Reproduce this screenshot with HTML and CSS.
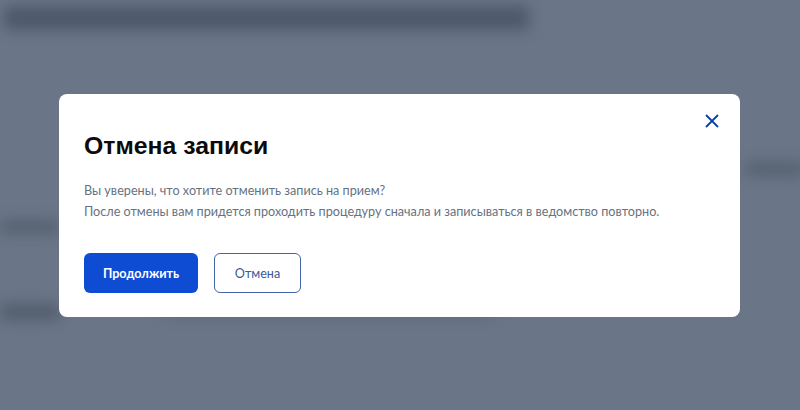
FILE: index.html
```html
<!DOCTYPE html>
<html lang="ru">
<head>
<meta charset="utf-8">
<link rel="stylesheet" href="styles.css">
</head>
<body>
<div class="page">
  <div class="page-title"></div>
  <div class="page-row r1"></div>
  <div class="page-row r2"></div>
  <div class="page-row r3"></div>
  <div class="page-row r4"></div>
  <div class="page-row r5"></div>
</div>
<div class="overlay">
  <div class="modal">
    <button class="close" aria-label="Закрыть">
      <svg width="14" height="14" viewBox="0 0 14 14"><path d="M1 1L13 13M13 1L1 13" stroke="#0b3ea8" stroke-width="1.8" fill="none"/></svg>
    </button>
    <h2 class="title">Отмена записи</h2>
    <p class="text">Вы уверены, что хотите отменить запись на прием?<br>После отмены вам придется проходить процедуру сначала и записываться в ведомство повторно.</p>
    <div class="actions">
      <button class="btn primary">Продолжить</button>
      <button class="btn secondary">Отмена</button>
    </div>
  </div>
</div>
</body>
</html>
```
FILE: styles.css
```css
html, body {
  margin: 0;
  padding: 0;
  width: 800px;
  height: 410px;
  overflow: hidden;
  background: #6a7587;
  font-family: Lato, "Noto Sans", sans-serif;
}
.page {
  display: flex;
  flex-direction: column;
  padding: 6px 0 0 0;
  filter: blur(7px);
}
.page-title {
  width: 525px;
  height: 24px;
  margin-left: 4px;
  background: #4d596b;
  border-radius: 4px;
}
.page-row {
  border-radius: 4px;
}
.r1 { width: 60px; height: 14px; margin: 132px 0 0 745px; background: #56616f; }
.r2 { width: 60px; height: 14px; margin: 44px 0 0 0; background: #56616f; }
.r3 { width: 460px; height: 12px; margin: 40px 0 0 100px; background: #5a6679; }
.r4 { width: 60px; height: 16px; margin: 18px 0 0 0; background: #525d6c; }
.r5 { width: 330px; height: 12px; margin: -14px 0 0 165px; background: #5f6b7d; }

.overlay {
  position: absolute;
  left: 0;
  top: 0;
  width: 800px;
  height: 410px;
}
.modal {
  position: absolute;
  left: 59px;
  top: 94px;
  width: 681px;
  height: 223px;
  box-sizing: border-box;
  background: #fff;
  border-radius: 8px;
  padding: 26px 26px 0 25px;
}
.close {
  position: absolute;
  right: 21px;
  top: 20px;
  width: 14px;
  height: 14px;
  padding: 0;
  border: 0;
  background: none;
  display: flex;
}
.title {
  margin: 10px 0 0 0;
  font-family: "Liberation Sans", Arial, sans-serif;
  font-weight: 700;
  font-size: 24.8px;
  line-height: 32px;
  color: #0b0b0b;
}
.text {
  margin: 18px 0 0 0;
  font-size: 12.63px;
  line-height: 21px;
  color: #66727f;
}
.actions {
  display: flex;
  gap: 16px;
  margin-top: 31px;
}
.btn {
  height: 40px;
  box-sizing: border-box;
  border-radius: 6px;
  font-family: Lato, "Noto Sans", sans-serif;
  font-size: 12.6px;
  padding: 0;
}
.primary {
  width: 114px;
  background: #0d4cd3;
  border: 0;
  color: #fff;
  font-weight: 700;
}
.secondary {
  width: 87px;
  background: #fff;
  border: 1px solid #4466a8;
  color: #3b5998;
  font-weight: 400;
}
```
